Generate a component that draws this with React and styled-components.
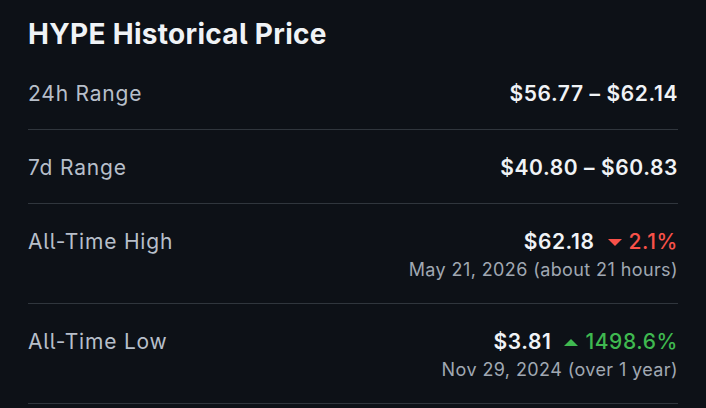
import React from 'react';
import styled, { createGlobalStyle } from 'styled-components';

const GlobalStyle = createGlobalStyle`
  html, body {
    margin: 0;
    padding: 0;
    background: #0d1117;
  }
  body {
    font-family: Inter, "Noto Sans", "Liberation Sans", sans-serif;
    font-feature-settings: "cv05" 1;
    -webkit-font-smoothing: antialiased;
  }
`;

const Panel = styled.section`
  width: 706px;
  height: 408px;
  box-sizing: border-box;
  padding: 14px 28px 0;
  background: #0d1117;
  overflow: hidden;
`;

const Title = styled.h2`
  margin: 0 0 2px;
  font-size: 28px;
  line-height: 40px;
  font-weight: 700;
  color: #f0f3f6;
  letter-spacing: 0.3px;
`;

const Row = styled.div`
  display: flex;
  justify-content: space-between;
  align-items: flex-start;
  padding: ${(p) => (p.$tall ? '24px 0 19px' : '24px 0 21px')};
  border-bottom: 1px solid #30363d;
`;

const Label = styled.span`
  font-size: 21px;
  line-height: 28px;
  letter-spacing: 0.8px;
  color: #b7bfca;
`;

const Right = styled.div`
  display: flex;
  flex-direction: column;
  align-items: flex-end;
`;

const Value = styled.div`
  display: flex;
  align-items: center;
  gap: 13px;
  font-size: 21px;
  line-height: 28px;
  font-weight: 600;
  letter-spacing: 0.6px;
  color: #f0f3f6;
`;

const Change = styled.span`
  display: inline-flex;
  align-items: center;
  gap: 7px;
  font-weight: 500;
  color: ${(p) => (p.$up ? '#3fb950' : '#f85149')};
`;

const Caret = styled.span`
  width: 0;
  height: 0;
  border-left: 7px solid transparent;
  border-right: 7px solid transparent;
  ${(p) => (p.$up ? 'border-bottom: 7px solid #3fb950;' : 'border-top: 7px solid #f85149;')}
`;

const DateText = styled.div`
  font-size: 18px;
  line-height: 28px;
  letter-spacing: 0.4px;
  color: #a0a8b2;
`;

const rows = [
  { label: '24h Range', value: '$56.77 – $62.14' },
  { label: '7d Range', value: '$40.80 – $60.83' },
  { label: 'All-Time High', value: '$62.18', change: '2.1%', up: false, date: 'May 21, 2026 (about 21 hours)' },
  { label: 'All-Time Low', value: '$3.81', change: '1498.6%', up: true, date: 'Nov 29, 2024 (over 1 year)' },
];

export default function App() {
  return (
    <>
      <GlobalStyle />
      <Panel>
        <Title>HYPE Historical Price</Title>
        {rows.map((r) => (
          <Row key={r.label} $tall={!!r.date}>
            <Label>{r.label}</Label>
            <Right>
              <Value>
                {r.value}
                {r.change && (
                  <Change $up={r.up}>
                    <Caret $up={r.up} />
                    {r.change}
                  </Change>
                )}
              </Value>
              {r.date && <DateText>{r.date}</DateText>}
            </Right>
          </Row>
        ))}
      </Panel>
    </>
  );
}
